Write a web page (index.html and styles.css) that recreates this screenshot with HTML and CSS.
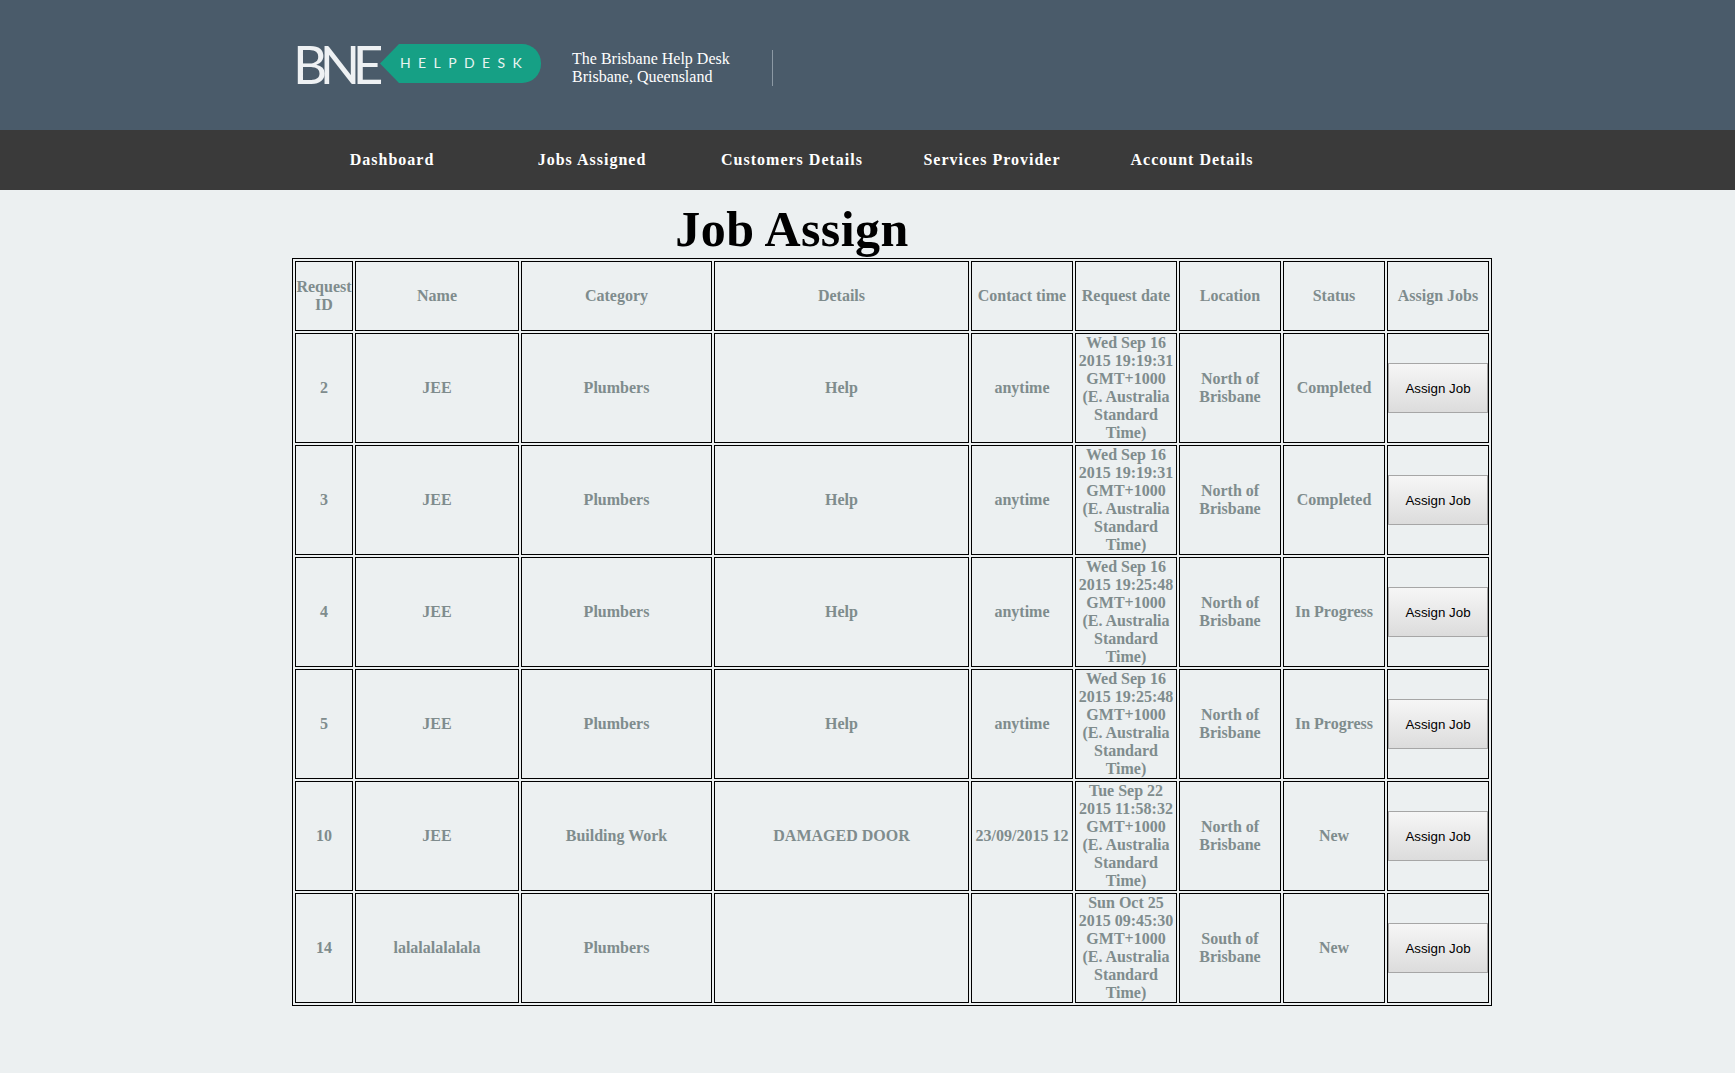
FILE: index.html
```html
<!DOCTYPE html>
<html lang="en">
<head>
    <meta charset="UTF-8">
    <title>Job Assign</title>
    <link rel="stylesheet" href="styles.css">
</head>
<body>
    <header class="top">
        <div class="logo">
            <span class="logo-bne">BNE</span>
            <span class="logo-tag">HELPDESK</span>
        </div>
        <p class="tagline">The Brisbane Help Desk<br>Brisbane, Queensland</p>
        <div class="divider"></div>
    </header>

    <nav class="menu">
        <a href="#">Dashboard</a>
        <a href="#">Jobs Assigned</a>
        <a href="#">Customers Details</a>
        <a href="#">Services Provider</a>
        <a href="#">Account Details</a>
    </nav>

    <main class="content">
        <h1>Job Assign</h1>
        <table class="jobs">
            <tr class="head">
                <th>Request ID</th>
                <th>Name</th>
                <th>Category</th>
                <th>Details</th>
                <th>Contact time</th>
                <th>Request date</th>
                <th>Location</th>
                <th>Status</th>
                <th>Assign Jobs</th>
            </tr>
            <tr>
                <td>2</td>
                <td>JEE</td>
                <td>Plumbers</td>
                <td>Help</td>
                <td>anytime</td>
                <td>Wed Sep 16 2015 19:19:31 GMT+1000 (E. Australia Standard Time)</td>
                <td>North of Brisbane</td>
                <td>Completed</td>
                <td><button>Assign Job</button></td>
            </tr>
            <tr>
                <td>3</td>
                <td>JEE</td>
                <td>Plumbers</td>
                <td>Help</td>
                <td>anytime</td>
                <td>Wed Sep 16 2015 19:19:31 GMT+1000 (E. Australia Standard Time)</td>
                <td>North of Brisbane</td>
                <td>Completed</td>
                <td><button>Assign Job</button></td>
            </tr>
            <tr>
                <td>4</td>
                <td>JEE</td>
                <td>Plumbers</td>
                <td>Help</td>
                <td>anytime</td>
                <td>Wed Sep 16 2015 19:25:48 GMT+1000 (E. Australia Standard Time)</td>
                <td>North of Brisbane</td>
                <td>In Progress</td>
                <td><button>Assign Job</button></td>
            </tr>
            <tr>
                <td>5</td>
                <td>JEE</td>
                <td>Plumbers</td>
                <td>Help</td>
                <td>anytime</td>
                <td>Wed Sep 16 2015 19:25:48 GMT+1000 (E. Australia Standard Time)</td>
                <td>North of Brisbane</td>
                <td>In Progress</td>
                <td><button>Assign Job</button></td>
            </tr>
            <tr>
                <td>10</td>
                <td>JEE</td>
                <td>Building Work</td>
                <td>DAMAGED DOOR</td>
                <td>23/09/2015 12</td>
                <td>Tue Sep 22 2015 11:58:32 GMT+1000 (E. Australia Standard Time)</td>
                <td>North of Brisbane</td>
                <td>New</td>
                <td><button>Assign Job</button></td>
            </tr>
            <tr>
                <td>14</td>
                <td>lalalalalalala</td>
                <td>Plumbers</td>
                <td></td>
                <td></td>
                <td>Sun Oct 25 2015 09:45:30 GMT+1000 (E. Australia Standard Time)</td>
                <td>South of Brisbane</td>
                <td>New</td>
                <td><button>Assign Job</button></td>
            </tr>
        </table>
    </main>
</body>
</html>
```

FILE: styles.css
```css
body {
    margin: 0;
    background-color: #ecf0f1;
    font-family: "Liberation Serif", serif;
    font-size: 16px;
}
.top {
    display: flex;
    align-items: flex-start;
    height: 130px;
    padding-left: 293px;
    background-color: #4a5b6a;
    color: white;
}
.logo {
    display: flex;
    align-items: center;
    margin-top: 44px;
    height: 39px;
}
.logo-bne {
    width: 87px;
    font-family: "Lato", sans-serif;
    font-weight: 400;
    font-size: 53px;
    line-height: 39px;
    letter-spacing: -7.5px;
    color: #eef1f3;
}
.logo-tag {
    display: block;
    width: 141px;
    height: 39px;
    padding-left: 20px;
    background-color: #16a085;
    border-radius: 0 19px 19px 0;
    clip-path: polygon(19px 0, 100% 0, 100% 100%, 19px 100%, 0 50%);
    font-family: "Lato", sans-serif;
    font-size: 14px;
    line-height: 38px;
    letter-spacing: 7.4px;
    color: #e8f4f1;
}
.tagline {
    margin: 50px 0 0 31px;
    width: 200px;
    line-height: 18px;
}
.divider {
    width: 1px;
    height: 36px;
    margin-top: 50px;
    background-color: #8c99a4;
}
.menu {
    display: flex;
    height: 60px;
    padding-left: 292px;
    background-color: #3a3a3a;
}
.menu a {
    width: 200px;
    color: white;
    font-weight: bold;
    line-height: 60px;
    letter-spacing: 1px;
    text-align: center;
    text-decoration: none;
}
.content {
    padding-left: 292px;
}
h1 {
    width: 1000px;
    margin: 0;
    padding-top: 11px;
    font-size: 50px;
    line-height: 57px;
    letter-spacing: 0.4px;
    text-align: center;
    color: black;
}
.jobs {
    table-layout: fixed;
    box-sizing: border-box;
    width: 1200px;
    border: 1px solid black;
    border-spacing: 2px;
}
.jobs th, .jobs td {
    box-sizing: border-box;
    padding: 0;
    border: 1px solid black;
    color: #7f8c8d;
    font-weight: bold;
    text-align: center;
    vertical-align: middle;
    line-height: 18px;
}
.head th {
    width: 102px;
    height: 70px;
}
.head th:nth-child(1) { width: 58px; }
.head th:nth-child(2) { width: 164px; }
.head th:nth-child(3) { width: 191px; }
.head th:nth-child(4) { width: 255px; }
.jobs td {
    height: 110px;
}
.jobs button {
    display: block;
    width: 100px;
    height: 50px;
    margin: 0 auto;
    padding: 0;
    border: 1px solid #a6a6a6;
    background: linear-gradient(#f6f6f6, #dcdcdc);
    color: black;
    font-family: "Liberation Sans", sans-serif;
    font-size: 13.33px;
}
```
